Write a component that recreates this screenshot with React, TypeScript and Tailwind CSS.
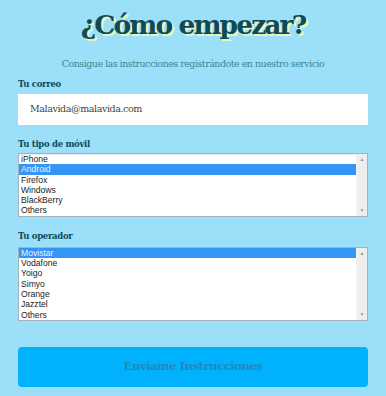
import React from "react";

interface ListBoxProps {
  options: string[];
  selected: number;
}

// Old-style listbox (select size=n) with a plain scrollbar on the right
const ListBox: React.FC<ListBoxProps> = ({ options, selected }) => (
  <div className="flex border border-[#a6b3bb] bg-white font-['Liberation_Sans',Arial,sans-serif] shadow-[inset_0_1px_1px_rgba(0,0,0,0.08)]">
    <ul className="flex-1">
      {options.map((opt, i) => (
        <li
          key={opt}
          className={
            "h-[10.3px] pl-[2px] text-[8.6px] leading-[10.3px] " +
            (i === selected ? "bg-[#3495f5] text-[#eaf4ff]" : "text-[#1b1b1b]")
          }
        >
          {opt}
        </li>
      ))}
    </ul>
    <div className="flex w-[11px] flex-col items-center justify-between border-l border-[#f3f3f3] bg-[#eeeeee] py-[3px] text-[5px] leading-none text-[#9a9a9a]">
      <span>▲</span>
      <span>▼</span>
    </div>
  </div>
);

const labelCls =
  "block font-['DejaVu_Serif',serif] text-[8.5px] font-bold leading-[12px] tracking-[-0.3px] text-[#0e4a5c]";

export default function App() {
  return (
    <div className="h-[396px] w-[386px] overflow-hidden bg-[#9cdff9] px-[18px]">
      <h1 className="pt-[7px] text-center font-['DejaVu_Serif',serif] text-[26.5px] font-bold leading-[36px] tracking-[-1.9px] text-[#0e4a5c] [text-shadow:2px_2px_0_#eef6b4]">
        ¿Cómo empezar?
      </h1>
      <p className="mt-[14px] text-center font-['DejaVu_Serif',serif] text-[9.5px] leading-[13px] tracking-[-0.5px] text-[#3b8797]">
        Consigue las instrucciones registrándote en nuestro servicio
      </p>

      <label className={"mt-[8px] " + labelCls}>Tu correo</label>
      <div className="mt-[4px] flex h-[31px] items-center bg-white pl-[12px] font-['DejaVu_Serif',serif] text-[9.5px] tracking-[-0.4px] text-[#3e4548]">
        Malavida@malavida.com
      </div>

      <label className={"mt-[13px] " + labelCls}>Tu tipo de móvil</label>
      <div className="mt-[3px]">
        <ListBox options={["iPhone", "Android", "Firefox", "Windows", "BlackBerry", "Others"]} selected={1} />
      </div>

      <label className={"mt-[13px] " + labelCls}>Tu operador</label>
      <div className="mt-[5px]">
        <ListBox options={["Movistar", "Vodafone", "Yoigo", "Simyo", "Orange", "Jazztel", "Others"]} selected={0} />
      </div>

      <button className="mt-[26px] flex h-[40px] w-full items-center justify-center rounded-[4px] bg-[#00b2fd] font-['DejaVu_Serif',serif] text-[11.5px] font-bold tracking-[-0.4px] text-[#2187c2]">
        Enviame Instrucciones
      </button>
    </div>
  );
}
